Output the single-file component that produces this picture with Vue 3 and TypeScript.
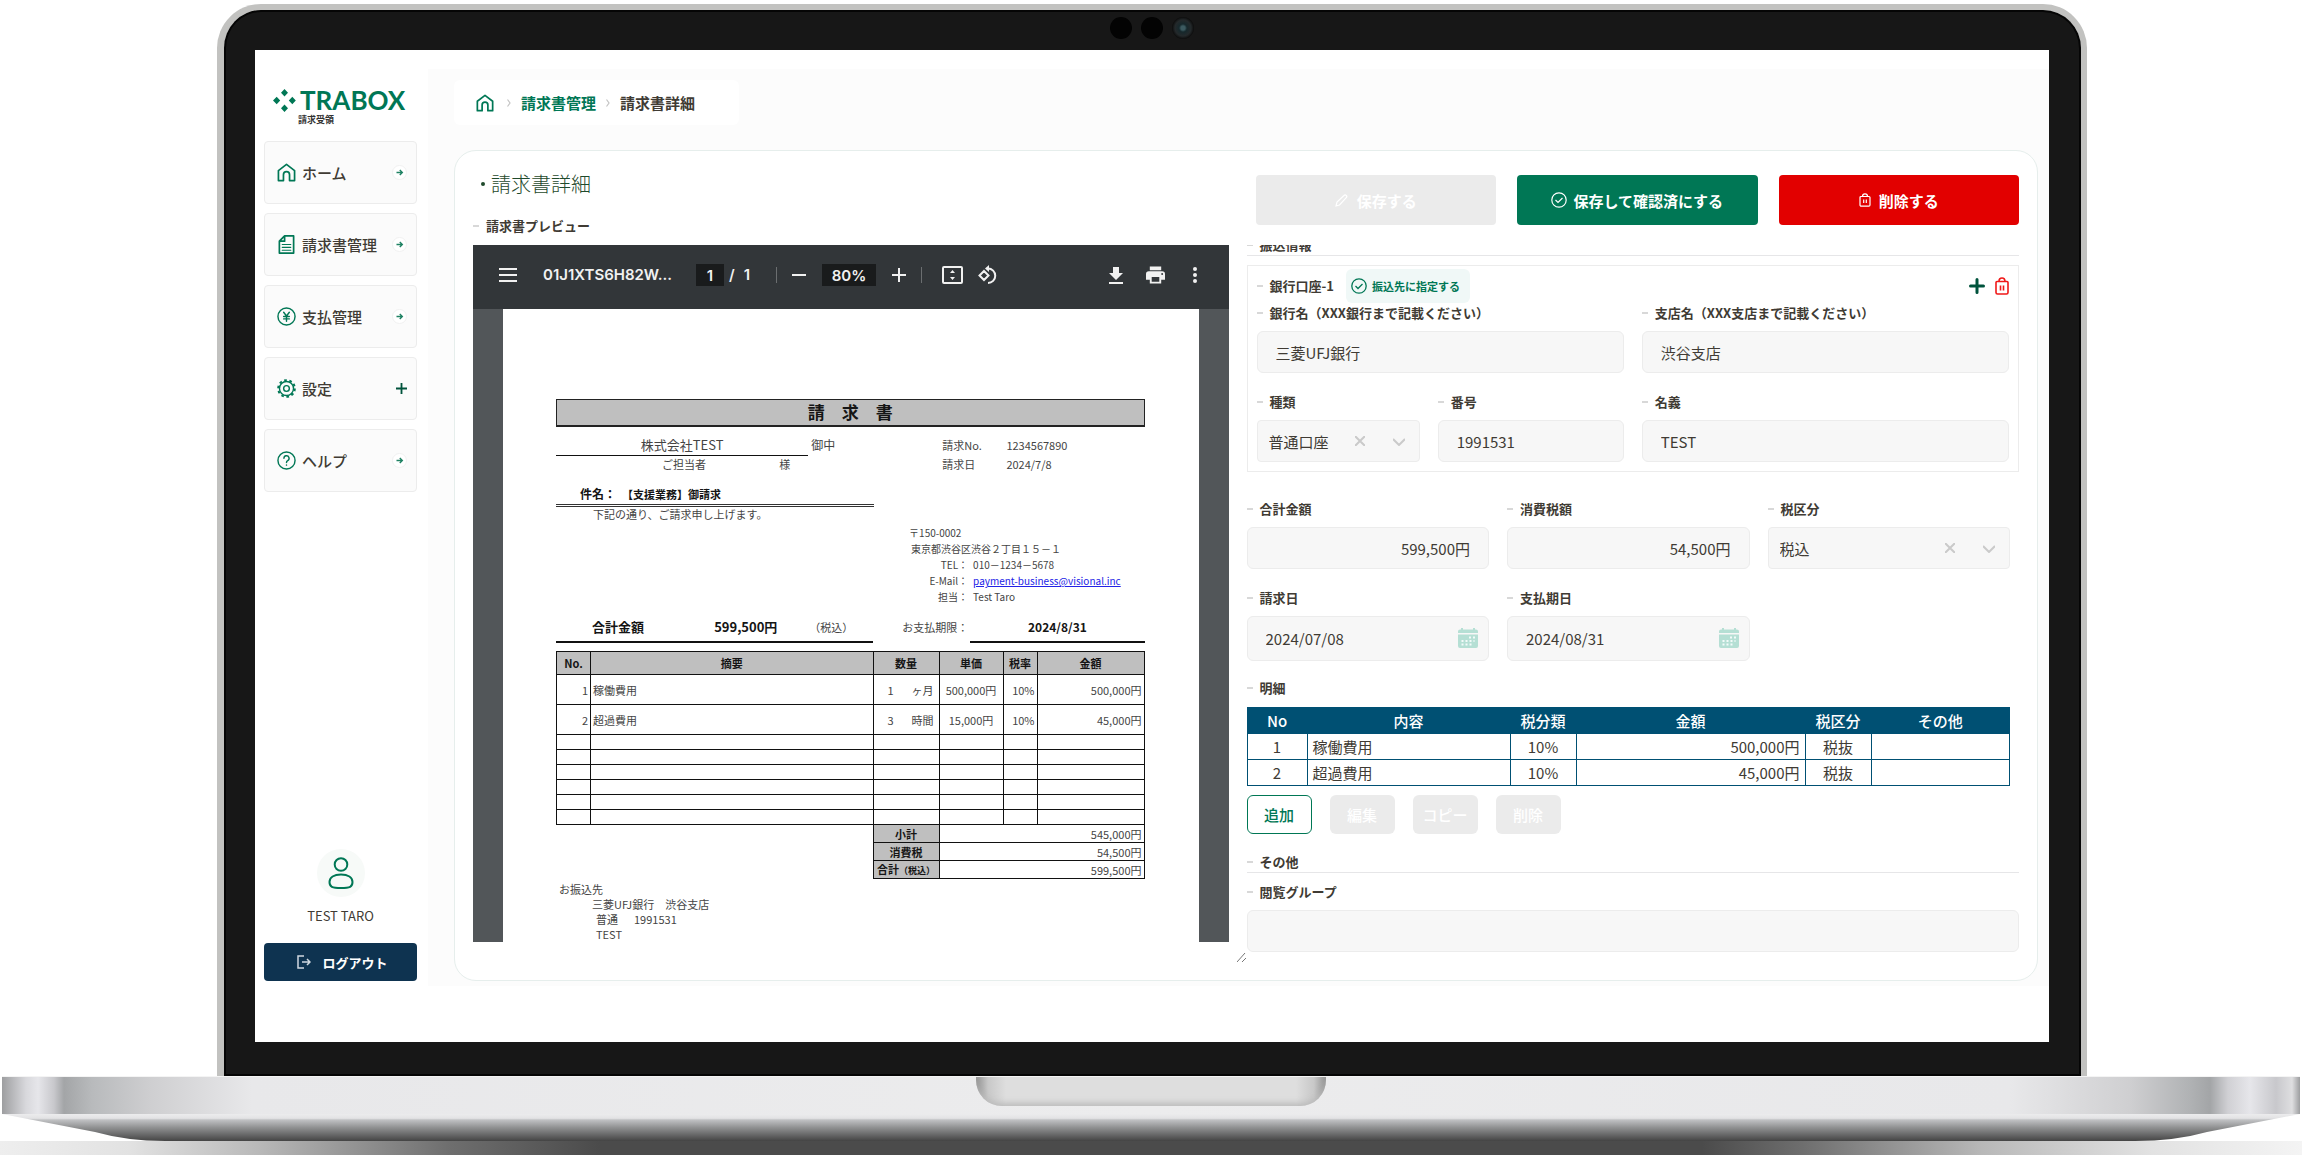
<script setup lang="ts">
import { ref } from 'vue'

interface NavItem {
  label: string
  icon: 'home' | 'doc' | 'yen' | 'gear' | 'help'
  expandable?: boolean
}

const navItems: NavItem[] = [
  { label: 'ホーム', icon: 'home' },
  { label: '請求書管理', icon: 'doc' },
  { label: '支払管理', icon: 'yen' },
  { label: '設定', icon: 'gear', expandable: true },
  { label: 'ヘルプ', icon: 'help' },
]

const invoiceLines = [
  { no: 1, name: '稼働費用', qty: '1', unit: 'ヶ月', price: '500,000円', rate: '10%', amount: '500,000円' },
  { no: 2, name: '超過費用', qty: '3', unit: '時間', price: '15,000円', rate: '10%', amount: '45,000円' },
]

const details = [
  { no: 1, name: '稼働費用', rate: '10%', amount: '500,000円', kind: '税抜' },
  { no: 2, name: '超過費用', rate: '10%', amount: '45,000円', kind: '税抜' },
]

const bankName = ref('三菱UFJ銀行')
const branchName = ref('渋谷支店')
const accountNo = ref('1991531')
const holder = ref('TEST')
const total = ref('599,500円')
const tax = ref('54,500円')
const issued = ref('2024/07/08')
const due = ref('2024/08/31')
const group = ref('')
</script>

<template>
  <div class="laptop">
    <div class="lid">
      <div class="cameras" aria-hidden="true"><i></i><i></i><i class="lens"></i></div>
      <div class="screen">
        <aside class="sidebar">
          <a class="logo" href="#">
            <span class="logo-row">
              <svg width="23" height="23" viewBox="0 0 23 23" fill="#007755">
                <path d="M11.500 0l3.500 3.700-3.500 3.700L8 3.700zM11.500 15.600l3.500 3.700-3.500 3.700L8 19.300zM3.700 7.800l3.500 3.700-3.500 3.700L0 11.500zM19.300 7.800l3.500 3.700-3.500 3.700-3.500-3.700z" />
              </svg>
              <b>TRABOX</b>
            </span>
            <small>請求受領</small>
          </a>
          <nav class="nav">
            <a v-for="item in navItems" :key="item.label" href="#" class="nav-item">
              <svg class="nav-icon" viewBox="0 0 20 20" fill="none" stroke="#007755" stroke-width="1.800" stroke-linejoin="round" stroke-linecap="round">
                <path v-if="item.icon === 'home'" d="M1.500 8L10 1.500 18.500 8v10.500h-5.300v-6.200a3.200 3.200 0 0 0-6.400 0v6.200H1.500z" />
                <g v-else-if="item.icon === 'doc'">
                  <path d="M8 1h9.500v18h-15V6.500zM8 1v5.500H2.500" />
                  <path d="M5.500 10h9M5.500 13h9M5.500 16h9" stroke-width="1.200" />
                </g>
                <g v-else-if="item.icon === 'yen'" stroke-width="1.500">
                  <circle cx="10" cy="10" r="9" />
                  <path d="M7 5.500l3 4 3-4M10 9.500v5.500M7 10h6M7 12.500h6" />
                </g>
                <g v-else-if="item.icon === 'gear'" stroke-width="1.500" stroke-linecap="butt">
                  <circle cx="10" cy="10" r="3" />
                  <circle cx="10" cy="10" r="7.400" />
                  <circle cx="10" cy="10" r="8.800" stroke-width="2" stroke-dasharray="2.800 2.730" />
                </g>
                <g v-else stroke-width="1.500">
                  <circle cx="10" cy="10" r="9" />
                  <path d="M7.300 7.700a2.700 2.700 0 1 1 4 2.400c-.9.500-1.300 1-1.300 2M10 14.800v.1" />
                </g>
              </svg>
              <span>{{ item.label }}</span>
              <svg v-if="item.expandable" class="nav-plus" viewBox="0 0 12 12" stroke="#00533c" stroke-width="2"><path d="M6 0v12M0 6h12" /></svg>
              <svg v-else class="nav-go" viewBox="0 0 16 16" fill="none">
                <circle cx="8" cy="8" r="7.500" fill="#fff" stroke="#efefef" />
                <path d="M4.800 8h6M8.300 5.300L11 8l-2.700 2.700" stroke="#1f8263" stroke-width="1.500" />
              </svg>
            </a>
          </nav>
          <div class="user">
            <span class="avatar">
              <svg width="26" height="32" viewBox="0 0 26 32" fill="none" stroke="#007755" stroke-width="2">
                <circle cx="13" cy="7.500" r="6.300" />
                <path d="M13 17.500c7 0 11.500 2.800 11.500 7.500s-2.500 6-11.500 6-11.500-1.300-11.500-6 4.500-7.500 11.500-7.500z" />
              </svg>
            </span>
            <span class="user-name">TEST TARO</span>
          </div>
          <button class="logout" type="button">
            <svg width="14" height="14" viewBox="0 0 14 14" fill="none" stroke="#cfd8df" stroke-width="1.500"><path d="M7 1H1v12h6M5 7h7.500M10 4l3 3-3 3" /></svg>
            ログアウト
          </button>
        </aside>

        <main class="main">
          <nav class="crumbs">
            <a href="#" class="crumb-home" aria-label="ホーム">
              <svg width="18" height="18" viewBox="0 0 20 20" fill="none" stroke="#007755" stroke-width="1.900" stroke-linejoin="round"><path d="M1.500 8L10 1.500 18.500 8v10.500h-5.300v-6.200a3.200 3.200 0 0 0-6.400 0v6.200H1.500z" /></svg>
            </a>
            <svg class="sep" viewBox="0 0 4 8" fill="none" stroke="#c4c4c4" stroke-width="1.200"><path d="M.5.5l2.500 3.500-2.500 3.500" /></svg>
            <a href="#">請求書管理</a>
            <svg class="sep" viewBox="0 0 4 8" fill="none" stroke="#c4c4c4" stroke-width="1.200"><path d="M.5.5l2.500 3.500-2.500 3.500" /></svg>
            <span>請求書詳細</span>
          </nav>

          <section class="card">
            <div class="left">
              <h1>請求書詳細</h1>
              <h2 class="label">請求書プレビュー</h2>
              <div class="viewer">
                <div class="toolbar">
                  <div class="tools file">
                    <svg width="18" height="14" viewBox="0 0 18 14" fill="#f1f1f1"><path d="M0 0h18v2H0zM0 6h18v2H0zM0 12h18v2H0z" /></svg>
                    <span class="file-name">01J1XTS6H82W...</span>
                  </div>
                  <div class="tools pages">
                    <input class="page-no" value="1" aria-label="ページ" />
                    <span>/</span><span>1</span>
                  </div>
                  <i class="bar"></i>
                  <div class="tools zoom">
                    <svg width="14" height="14" viewBox="0 0 14 14" fill="#f1f1f1"><path d="M0 6h14v2H0z" /></svg>
                    <input class="page-no scale" value="80%" aria-label="倍率" />
                    <svg width="14" height="14" viewBox="0 0 14 14" fill="#f1f1f1"><path d="M0 6h6V0h2v6h6v2H8v6H6V8H0z" /></svg>
                  </div>
                  <i class="bar"></i>
                  <div class="tools fit">
                    <svg width="21" height="18" viewBox="0 0 21 18" fill="#f1f1f1"><path fill-rule="evenodd" d="M2 0h17a2 2 0 0 1 2 2v14a2 2 0 0 1-2 2H2a2 2 0 0 1-2-2V2a2 2 0 0 1 2-2zm0 2v14h17V2z" /><path d="M10.500 4L13 7H8zM10.500 14L8 11h5z" /></svg>
                    <svg width="20" height="20" viewBox="0 0 20 20" fill="none" stroke="#f1f1f1" stroke-width="2"><path d="M6 6L10.500 10.500 6 15 1.500 10.500zM10 3.500a7 7 0 1 1 0 14.500" /><path d="M11 0v7L7 3.500z" fill="#f1f1f1" stroke="none" /></svg>
                  </div>
                  <div class="tools out">
                    <svg width="14" height="17" viewBox="0 0 14 17" fill="#f1f1f1"><path d="M4 0h6v6h4l-7 7-7-7h4zM0 15h14v2H0z" /></svg>
                    <svg width="19" height="18" viewBox="0 0 20 18" fill="#f1f1f1"><path fill-rule="evenodd" d="M4 0h12v4H4zM3 5h14a3 3 0 0 1 3 3v6h-4v4H4v-4H0V8a3 3 0 0 1 3-3zm3 6v5h8v-5zm11-4a1 1 0 1 0 0 2 1 1 0 0 0 0-2z" /></svg>
                    <svg width="4" height="16" viewBox="0 0 4 16" fill="#f1f1f1"><circle cx="2" cy="2" r="2" /><circle cx="2" cy="8" r="2" /><circle cx="2" cy="14" r="2" /></svg>
                  </div>
                </div>
                <article class="sheet">
                  <h3>請　求　書</h3>
                  <div class="row client">
                    <span class="company">株式会社TEST</span><span class="onchu">御中</span><span>請求No.</span><span>1234567890</span>
                  </div>
                  <div class="row person">
                    <span></span><span>ご担当者</span><span>様</span><span>請求日</span><span>2024/7/8</span>
                  </div>
                  <div class="subject"><b>件名：</b><b class="subject-name">【支援業務】御請求</b></div>
                  <p class="greeting">下記の通り、ご請求申し上げます。</p>
                  <div class="address">
                    <span class="wide">〒150-0002</span>
                    <span class="wide street">東京都渋谷区渋谷２丁目１５－１</span>
                    <span class="key">TEL：</span><span>010－1234－5678</span>
                    <span class="key">E-Mail：</span><a href="#">payment-business@visional.inc</a>
                    <span class="key">担当：</span><span>Test Taro</span>
                  </div>
                  <div class="totals">
                    <div class="sum"><span></span><b>合計金額</b><b>599,500円</b><span class="inc">（税込）</span></div>
                    <span class="due-label">お支払期限：</span>
                    <b class="due">2024/8/31</b>
                  </div>
                  <table class="items">
                    <colgroup><col class="c1" /><col /><col class="c3" /><col class="c4" /><col class="c1" /><col class="c6" /></colgroup>
                    <thead>
                      <tr><th>No.</th><th>摘要</th><th>数量</th><th>単価</th><th>税率</th><th>金額</th></tr>
                    </thead>
                    <tbody>
                      <tr v-for="line in invoiceLines" :key="line.no" class="filled">
                        <td class="num">{{ line.no }}</td>
                        <td>{{ line.name }}</td>
                        <td><span class="qty"><span>{{ line.qty }}</span><span>{{ line.unit }}</span></span></td>
                        <td class="mid">{{ line.price }}</td>
                        <td class="num">{{ line.rate }}</td>
                        <td class="num">{{ line.amount }}</td>
                      </tr>
                      <tr v-for="n in 6" :key="'blank' + n" class="blank"><td v-for="c in 6" :key="c"></td></tr>
                    </tbody>
                    <tfoot>
                      <tr><td class="none" colspan="2"></td><th>小計</th><td class="num" colspan="3">545,000円</td></tr>
                      <tr><td class="none" colspan="2"></td><th>消費税</th><td class="num" colspan="3">54,500円</td></tr>
                      <tr><td class="none" colspan="2"></td><th>合計<small>（税込）</small></th><td class="num" colspan="3">599,500円</td></tr>
                    </tfoot>
                  </table>
                  <div class="bank">
                    <p>お振込先</p>
                    <p class="in">三菱UFJ銀行　渋谷支店</p>
                    <p class="in2">普通<span>1991531</span></p>
                    <p class="in2">TEST</p>
                  </div>
                </article>
              </div>
              <svg class="grip" width="9" height="9" viewBox="0 0 9 9" stroke="#777" fill="none"><path d="M0 9L8 0M5 9l4-4" /></svg>
            </div>

            <div class="right">
              <div class="actions">
                <button type="button" disabled>
                  <svg width="13" height="13" viewBox="0 0 13 13" fill="none" stroke="#fff" stroke-width="1.200"><path d="M1 12l1-4L9 1.500a1.500 1.500 0 0 1 2.300 2.200L4.500 11z" /></svg>
                  保存する
                </button>
                <button type="button" class="confirm">
                  <svg width="16" height="16" viewBox="0 0 16 16" fill="none" stroke="#fff" stroke-width="1.200"><circle cx="8" cy="8" r="7.200" /><path d="M4.500 8l2.500 2.500 4.500-4.500" /></svg>
                  保存して確認済にする
                </button>
                <button type="button" class="delete">
                  <svg width="12" height="14" viewBox="0 0 12 14" fill="none" stroke="#fff" stroke-width="1.200"><path d="M2 3.500h8a1 1 0 0 1 1 1V12a1.200 1.200 0 0 1-1.200 1.200H2.200A1.200 1.200 0 0 1 1 12V4.500a1 1 0 0 1 1-1zM3.500 3.500C3.500 1.800 4.300.8 6 .8s2.500 1 2.500 2.700M4.700 6.500V10M7.300 6.500V10" /></svg>
                  削除する
                </button>
              </div>

              <form class="scroller" @submit.prevent>
                <h2 class="label ruled cut">振込情報</h2>
                <div class="account">
                  <div class="account-head">
                    <h3 class="label">銀行口座-1</h3>
                    <button type="button" class="assign">
                      <svg width="16" height="16" viewBox="0 0 16 16" fill="none" stroke="#007755" stroke-width="1.300"><circle cx="8" cy="8" r="7.200" /><path d="M4.500 8l2.500 2.500 4.500-4.500" /></svg>
                      振込先に指定する
                    </button>
                    <button type="button" class="icon-btn add" aria-label="追加">
                      <svg width="16" height="16" viewBox="0 0 16 16" stroke="#00533c" stroke-width="3" stroke-linecap="round"><path d="M8 1.500v13M1.500 8h13" /></svg>
                    </button>
                    <button type="button" class="icon-btn" aria-label="削除">
                      <svg width="14" height="18" viewBox="0 0 14 18" fill="none" stroke="#f01818" stroke-width="1.600"><path d="M2 4.500h10a1 1 0 0 1 1 1v10a1.500 1.500 0 0 1-1.500 1.500h-9A1.500 1.500 0 0 1 1 15.500v-10a1 1 0 0 1 1-1zM4 4.500C4 2.200 5 1 7 1s3 1.200 3 3.500M5.500 8.500v5M8.500 8.500v5" /></svg>
                    </button>
                  </div>
                  <div class="two">
                    <div class="field"><label class="label" for="bank">銀行名（XXX銀行まで記載ください）</label><input id="bank" v-model="bankName" /></div>
                    <div class="field"><label class="label" for="branch">支店名（XXX支店まで記載ください）</label><input id="branch" v-model="branchName" /></div>
                  </div>
                  <div class="two second">
                    <div class="split">
                      <div class="field">
                        <label class="label" for="kind">種類</label>
                        <div class="pick">
                          <select id="kind"><option>普通口座</option></select>
                          <svg class="clear" viewBox="0 0 10 10" stroke="#cacaca" stroke-width="2"><path d="M0 0l10 10M10 0L0 10" /></svg>
                          <svg class="down" viewBox="0 0 12 8" fill="none" stroke="#cacaca" stroke-width="2"><path d="M0 1l6 6 6-6" /></svg>
                        </div>
                      </div>
                      <div class="field"><label class="label" for="no">番号</label><input id="no" v-model="accountNo" /></div>
                    </div>
                    <div class="field"><label class="label" for="holder">名義</label><input id="holder" v-model="holder" /></div>
                  </div>
                </div>

                <div class="three amounts">
                  <div class="field"><label class="label" for="total">合計金額</label><input id="total" v-model="total" class="money" /></div>
                  <div class="field"><label class="label" for="tax">消費税額</label><input id="tax" v-model="tax" class="money" /></div>
                  <div class="field">
                    <label class="label" for="taxkind">税区分</label>
                    <div class="pick">
                      <select id="taxkind"><option>税込</option></select>
                      <svg class="clear" viewBox="0 0 10 10" stroke="#cacaca" stroke-width="2"><path d="M0 0l10 10M10 0L0 10" /></svg>
                      <svg class="down" viewBox="0 0 12 8" fill="none" stroke="#cacaca" stroke-width="2"><path d="M0 1l6 6 6-6" /></svg>
                    </div>
                  </div>
                </div>
                <div class="three dates">
                  <div class="field">
                    <label class="label" for="issued">請求日</label>
                    <div class="pick">
                      <input id="issued" v-model="issued" />
                      <svg class="cal" viewBox="0 0 20 20" fill="#b5dfd4"><path d="M2 1.500h16a2 2 0 0 1 2 2V5H0V3.500a2 2 0 0 1 2-2zM0 6.500h20V18a2 2 0 0 1-2 2H2a2 2 0 0 1-2-2zM3 0h2v2H3zM15 0h2v2h-2z" /><path fill="none" stroke="#f3fbf9" stroke-width="2" stroke-dasharray="2 2" d="M11 9.500h6M3.500 13h13M3.500 16.500h10" /></svg>
                    </div>
                  </div>
                  <div class="field">
                    <label class="label" for="due">支払期日</label>
                    <div class="pick">
                      <input id="due" v-model="due" />
                      <svg class="cal" viewBox="0 0 20 20" fill="#b5dfd4"><path d="M2 1.500h16a2 2 0 0 1 2 2V5H0V3.500a2 2 0 0 1 2-2zM0 6.500h20V18a2 2 0 0 1-2 2H2a2 2 0 0 1-2-2zM3 0h2v2H3zM15 0h2v2h-2z" /><path fill="none" stroke="#f3fbf9" stroke-width="2" stroke-dasharray="2 2" d="M11 9.500h6M3.500 13h13M3.500 16.500h10" /></svg>
                    </div>
                  </div>
                </div>

                <div class="detail">
                  <h2 class="label">明細</h2>
                  <table class="lines">
                    <colgroup><col class="d1" /><col class="d2" /><col class="d3" /><col class="d4" /><col class="d3" /><col /></colgroup>
                    <thead>
                      <tr><th>No</th><th>内容</th><th>税分類</th><th>金額</th><th>税区分</th><th>その他</th></tr>
                    </thead>
                    <tbody>
                      <tr v-for="d in details" :key="d.no">
                        <td>{{ d.no }}</td><td class="name">{{ d.name }}</td><td>{{ d.rate }}</td><td class="amount">{{ d.amount }}</td><td>{{ d.kind }}</td><td></td>
                      </tr>
                    </tbody>
                  </table>
                  <div class="row-actions">
                    <button type="button" class="append">追加</button>
                    <button type="button" disabled>編集</button>
                    <button type="button" disabled>コピー</button>
                    <button type="button" disabled>削除</button>
                  </div>
                </div>

                <h2 class="label ruled">その他</h2>
                <div class="field group"><label class="label" for="group">閲覧グループ</label><input id="group" v-model="group" /></div>
              </form>
            </div>
          </section>
        </main>
      </div>
    </div>
    <div class="deck"><div class="notch"></div></div>
    <svg class="belly" viewBox="0 0 2302 27" preserveAspectRatio="none">
      <defs>
        <linearGradient id="bellyShade" x1="0" y1="0" x2="0" y2="1">
          <stop offset="0" stop-color="#ececed" /><stop offset=".16" stop-color="#e2e2e4" /><stop offset=".22" stop-color="#c0c1c3" />
          <stop offset=".5" stop-color="#909192" /><stop offset="1" stop-color="#444" />
        </linearGradient>
      </defs>
      <path fill="url(#bellyShade)" d="M2 0H2300L2207 18Q2175 27 2135 27H165Q127 27 95 18z" />
    </svg>
    <div class="floor"></div>
  </div>
</template>

<style>
body {
  background: #fff;
}
</style>

<style scoped>
* {
  box-sizing: border-box;
}
.laptop {
  min-width: 1900px;
  padding-top: 4px;
  font-family: "Noto Sans CJK JP", "Noto Sans", sans-serif;
  color: #403b34;
}
h1, h2, h3, p {
  margin: 0;
}
a {
  color: inherit;
  text-decoration: none;
}
button, input, select {
  font: inherit;
  color: inherit;
}
button {
  cursor: pointer;
  padding: 0;
}
svg {
  flex: none;
}
.lid {
  position: relative;
  margin: 0 215px 0 217px;
  padding: 40px 32px 34px 31px;
  border: solid #c2c2c0;
  border-width: 6px 6px 0 7px;
  border-radius: 44px 44px 0 0;
  background: #171717;
  box-shadow: inset 0 0 0 2px #050505;
}
.cameras {
  position: absolute;
  top: 7px;
  left: 0;
  right: 2px;
  display: flex;
  justify-content: center;
  gap: 9px;
}
.cameras i {
  width: 22px;
  height: 22px;
  border-radius: 50%;
  background: #030303;
}
.cameras .lens {
  background: radial-gradient(circle, #3c5a60 0 2px, #16282c 4px, #24292b 8px, #0c0c0c 11px);
}
.screen {
  display: flex;
  padding: 19px 0 56px;
  background: #fff;
}
.sidebar {
  display: flex;
  flex-direction: column;
  width: 173px;
  padding: 18px 11px 5px 9px;
}
.logo {
  display: flex;
  flex-direction: column;
  height: 54px;
  padding-left: 9px;
}
.logo-row {
  display: flex;
  align-items: center;
  gap: 4px;
  height: 26px;
  color: #007755;
}
.logo b {
  font: 700 26px/26px Lato, sans-serif;
}
.logo small {
  margin-top: 2px;
  padding-left: 25px;
  font-size: 9px;
  font-weight: 700;
  line-height: 10px;
  color: #333;
}
.nav {
  display: flex;
  flex-direction: column;
  gap: 9px;
}
.nav-item {
  display: flex;
  align-items: center;
  height: 63px;
  padding: 0 9px 1px 12px;
  border: 1px solid #ececec;
  border-radius: 4px;
  background: #fbfbfb;
  font-size: 15px;
  font-weight: 500;
}
.nav-icon {
  width: 19px;
  height: 19px;
  margin-right: 6px;
}
.nav-go {
  width: 15px;
  height: 15px;
  margin-left: auto;
}
.nav-plus {
  width: 11px;
  height: 11px;
  margin-left: auto;
}
.user {
  display: flex;
  flex-direction: column;
  align-items: center;
  gap: 9px;
  margin-top: auto;
}
.avatar {
  display: grid;
  place-items: center;
  width: 48px;
  height: 48px;
  border-radius: 50%;
  background: #f7faf8;
}
.user-name {
  font-size: 13px;
  line-height: 20px;
}
.logout {
  display: flex;
  align-items: center;
  justify-content: center;
  gap: 11px;
  height: 38px;
  margin-top: 17px;
  padding-left: 4px;
  border: 0;
  border-radius: 4px;
  background: #0e3350;
  color: #fff;
  font-size: 13px;
  font-weight: 700;
}
.main {
  flex: 1;
  min-width: 0;
  padding: 11px 11px 5px 26px;
  background: #fcfcfc;
}
.crumbs {
  display: flex;
  align-items: center;
  gap: 10px;
  width: 285px;
  height: 45px;
  margin-bottom: 25px;
  padding-left: 22px;
  border-radius: 6px;
  background: #fff;
  font-size: 15px;
  font-weight: 700;
}
.crumbs a {
  display: flex;
  color: #007755;
}
.crumb-home {
  padding-right: 3px;
}
.sep {
  width: 4px;
  height: 8px;
}
.card {
  display: grid;
  grid-template-columns: 773fr 772fr;
  padding: 0 18px 28px;
  border: 1px solid #e6eeec;
  border-radius: 22px;
  background: #fff;
}
.left {
  position: relative;
  padding: 20px 18px 0 0;
}
h1 {
  display: flex;
  align-items: center;
  gap: 6px;
  padding-left: 8px;
  font-size: 20px;
  font-weight: 300;
  line-height: 26px;
  color: #1f4a2c;
}
h1::before {
  content: "";
  width: 4px;
  height: 4px;
  border-radius: 50%;
  background: #1f4a2c;
}
.label {
  display: flex;
  align-items: center;
  gap: 7px;
  font-size: 13px;
  font-weight: 700;
  line-height: 20px;
  white-space: nowrap;
}
.label::before {
  content: "";
  width: 6px;
  height: 2px;
  background: #d8d8d8;
}
.left > .label {
  margin: 19px 0 9px;
}
.viewer {
  padding: 0 30px;
  background: #525659;
}
.toolbar {
  display: flex;
  align-items: center;
  height: 64px;
  margin: 0 -30px;
  padding: 0 32px 4px 26px;
  background: #323639;
  color: #f1f1f1;
  font: 600 15px/20px Inter, Roboto, sans-serif;
}
.tools {
  display: flex;
  align-items: center;
}
.file {
  gap: 26px;
}
.file-name {
  width: 153px;
}
.pages {
  gap: 5px;
}
.pages span + span {
  margin-left: 4px;
}
.page-no {
  width: 28px;
  height: 22px;
  padding: 0;
  border: 0;
  background: #191b1c;
  text-align: center;
}
.scale {
  width: 54px;
}
.bar {
  width: 1px;
  height: 16px;
  background: #6b6e70;
}
.pages + .bar {
  margin-left: 26px;
}
.zoom {
  gap: 16px;
  margin: 0 15px;
}
.fit {
  gap: 15px;
  margin-left: 20px;
}
.out {
  gap: 23px;
  margin-left: auto;
}
.out svg:last-child {
  margin-left: 5px;
}
.sheet {
  padding: 90px 54px 0 53px;
  background: #fff;
  color: #444;
  font-size: 11px;
  line-height: 16px;
}
.sheet b, .sheet h3, .sheet th {
  color: #151515;
}
.sheet h3 {
  height: 28px;
  border: 1px solid #222;
  border-bottom-width: 2px;
  background: #bfbfbf;
  font-size: 17px;
  line-height: 23px;
  text-align: center;
}
.row {
  display: grid;
}
.client {
  grid-template-columns: 252fr 134fr 64fr 138fr;
  align-items: start;
}
.client span {
  padding-top: 8px;
  line-height: 20px;
}
.client .company {
  border-bottom: 1px solid #111;
  font-size: 13px;
  text-align: center;
}
.client .onchu {
  padding-left: 3px;
  font-size: 12px;
}
.person {
  grid-template-columns: 106fr 117fr 163fr 64fr 138fr;
}
.subject {
  display: flex;
  align-items: center;
  gap: 6px;
  width: 54%;
  margin-top: 12px;
  padding-left: 24px;
  border-bottom: 3px double #333;
  font-size: 12px;
  line-height: 20px;
}
.subject-name {
  font-size: 11px;
}
.greeting {
  padding-left: 37px;
  line-height: 14px;
}
.address {
  display: grid;
  grid-template-columns: 59px 1fr;
  column-gap: 5px;
  margin: 4px 0 12px 60%;
  font-size: 10px;
}
.wide {
  grid-column: 1 / -1;
}
.street {
  padding-left: 2px;
}
.key {
  text-align: right;
}
.address a {
  color: #2222e6;
  text-decoration: underline;
}
.totals {
  display: grid;
  grid-template-columns: 317fr 97fr 174fr;
  line-height: 20px;
}
.sum {
  display: grid;
  grid-template-columns: 36fr 122fr 100fr 59fr;
  padding-bottom: 4px;
  border-bottom: 2px solid #111;
  font-size: 13px;
}
.sum .inc {
  margin-left: -5px;
  font-size: 11px;
  white-space: nowrap;
}
.due-label {
  padding-left: 29px;
}
.due {
  border-bottom: 2px solid #111;
  font-size: 12px;
  text-align: center;
}
.items {
  width: 100%;
  margin-top: 8px;
  border-collapse: collapse;
  table-layout: fixed;
}
.items th, .items td {
  height: 18px;
  padding: 0 2px;
  border: 1px solid #111;
  line-height: 14px;
}
.items th {
  background: #bfbfbf;
}
.items thead th {
  height: 23px;
}
.items .filled td {
  height: 30px;
}
.items .blank td {
  height: 15px;
}
.items .none {
  border: 0;
}
.items small {
  font-size: 9px;
}
.c1 {
  width: 34px;
}
.c3 {
  width: 66px;
}
.c4 {
  width: 64px;
}
.c6 {
  width: 107px;
}
.num {
  text-align: right;
}
.mid {
  text-align: center;
}
.qty {
  display: flex;
  justify-content: space-between;
  padding: 0 3px 0 12px;
}
.bank {
  padding: 3px 0 0 3px;
  line-height: 15px;
}
.in {
  padding-left: 33px;
}
.in2 {
  padding-left: 37px;
}
.in2 span {
  margin-left: 16px;
}
.grip {
  position: absolute;
  right: 1px;
  bottom: -10px;
}
.right {
  min-width: 0;
  padding-top: 24px;
}
.actions {
  display: grid;
  grid-template-columns: repeat(3, 1fr);
  gap: 21px;
  padding-left: 9px;
}
.actions button {
  display: flex;
  align-items: center;
  justify-content: center;
  gap: 6px;
  height: 50px;
  border: 0;
  border-radius: 4px;
  color: #fff;
  font-size: 15px;
  font-weight: 700;
}
.actions button:first-child {
  gap: 9px;
}
button:disabled {
  background: #ebebeb;
  color: #fff;
}
.actions .confirm {
  background: #007755;
}
.actions .delete {
  gap: 8px;
  background: #e20000;
}
.scroller {
  margin-top: 20px;
  overflow: hidden;
}
.ruled {
  height: 21px;
  border-bottom: 1px solid #e6e6e8;
}
.cut {
  margin-top: -10px;
}
.account {
  margin-top: 9px;
  padding: 3px 9px 9px;
  border: 1px solid #ececec;
}
.account-head {
  display: flex;
  align-items: center;
  height: 34px;
}
.assign {
  display: flex;
  align-items: center;
  gap: 5px;
  height: 34px;
  margin-left: 12px;
  padding: 0 10px 0 5px;
  border: 0;
  border-radius: 6px;
  background: #f0f8f7;
  color: #007755;
  font-size: 11px;
  font-weight: 700;
}
.icon-btn {
  display: flex;
  border: 0;
  background: none;
}
.icon-btn.add {
  margin: 0 10px 0 auto;
}
.two, .three, .split {
  display: grid;
  grid-template-columns: 1fr 1fr;
  gap: 18px;
}
.second {
  margin-top: 19px;
}
.split {
  grid-template-columns: 164fr 187fr;
}
.three {
  grid-template-columns: repeat(3, 1fr);
  padding-right: 9px;
}
.amounts {
  margin-top: 27px;
}
.dates {
  margin-top: 19px;
}
.field {
  min-width: 0;
}
.field input, .field select {
  display: block;
  width: 100%;
  height: 42px;
  margin-top: 8px;
  padding: 0 18px;
  border: 1px solid #ececec;
  border-radius: 6px;
  background: #f7f7f7;
  font-size: 15px;
  outline: 0;
}
.field select {
  padding: 0 11px;
  border-radius: 4px;
  appearance: none;
}
.field .money {
  text-align: right;
}
.dates .field input {
  height: 45px;
}
.pick {
  position: relative;
}
.clear, .down, .cal {
  position: absolute;
  pointer-events: none;
}
.clear {
  right: 55px;
  top: 16px;
  width: 10px;
  height: 10px;
}
.down {
  right: 15px;
  top: 18px;
  width: 12px;
  height: 8px;
}
.cal {
  right: 11px;
  top: 12px;
  width: 20px;
  height: 20px;
}
.detail {
  margin: 17px 9px 18px 0;
}
.lines {
  width: 100%;
  margin: 9px 0;
  border-collapse: collapse;
  table-layout: fixed;
  font-size: 15px;
  line-height: 20px;
}
.lines th, .lines td {
  height: 26px;
  padding: 0 5px;
  border: 1px solid #005073;
  text-align: center;
}
.lines th {
  background: #005073;
  color: #fff;
  font-weight: 500;
}
.lines .name {
  text-align: left;
}
.lines .amount {
  text-align: right;
}
.d1 {
  width: 60px;
}
.d2 {
  width: 203px;
}
.d3 {
  width: 66px;
}
.d4 {
  width: 229px;
}
.row-actions {
  display: flex;
  gap: 18px;
}
.row-actions button {
  width: 65px;
  height: 39px;
  border: 0;
  border-radius: 6px;
  font-size: 15px;
  font-weight: 500;
}
.row-actions .append {
  border: 1px solid #007755;
  background: #fff;
  color: #007755;
}
.group {
  margin-top: 9px;
}
.deck {
  display: flex;
  justify-content: center;
  height: 38px;
  margin: 0 2px;
  border-top: 1px solid #f4f4f4;
  background: linear-gradient(90deg, #9d9ea0 0, #d8d8dc 24px, #e6e6ea 36px, #c8c8cc 52px, #a3a5a7 62px, #b8babc 90px, #cfcfd1 150px, #e8e8ea 250px, #ececed 50%, #e8e8ea calc(100% - 290px), #cfcfd1 calc(100% - 170px), #b0b2b4 calc(100% - 110px), #a3a5a7 calc(100% - 90px), #d0d0d4 calc(100% - 72px), #e6e6ea calc(100% - 50px), #c8c8cc calc(100% - 24px), #dedee0 calc(100% - 8px), #9d9ea0 100%);
}
.notch {
  width: 350px;
  height: 29px;
  border-radius: 0 0 26px 26px;
  background: linear-gradient(90deg, #909090 0, #c8c8c8 12px, #dedede 30px, #dedede calc(100% - 30px), #c8c8c8 calc(100% - 12px), #909090 100%);
  box-shadow: inset 0 -6px 6px -3px #bbb;
}
.belly {
  display: block;
  width: 100%;
  height: 27px;
}
.floor {
  height: 14px;
  background: linear-gradient(90deg, #eee 0, #e2e2e2 130px, #b8b8b8 260px, #6e6e6e 450px, #4b4b4b 600px, #4b4b4b calc(100% - 600px), #6e6e6e calc(100% - 500px), #b8b8b8 calc(100% - 320px), #e2e2e2 calc(100% - 150px), #f4f4f4 100%);
}
</style>
